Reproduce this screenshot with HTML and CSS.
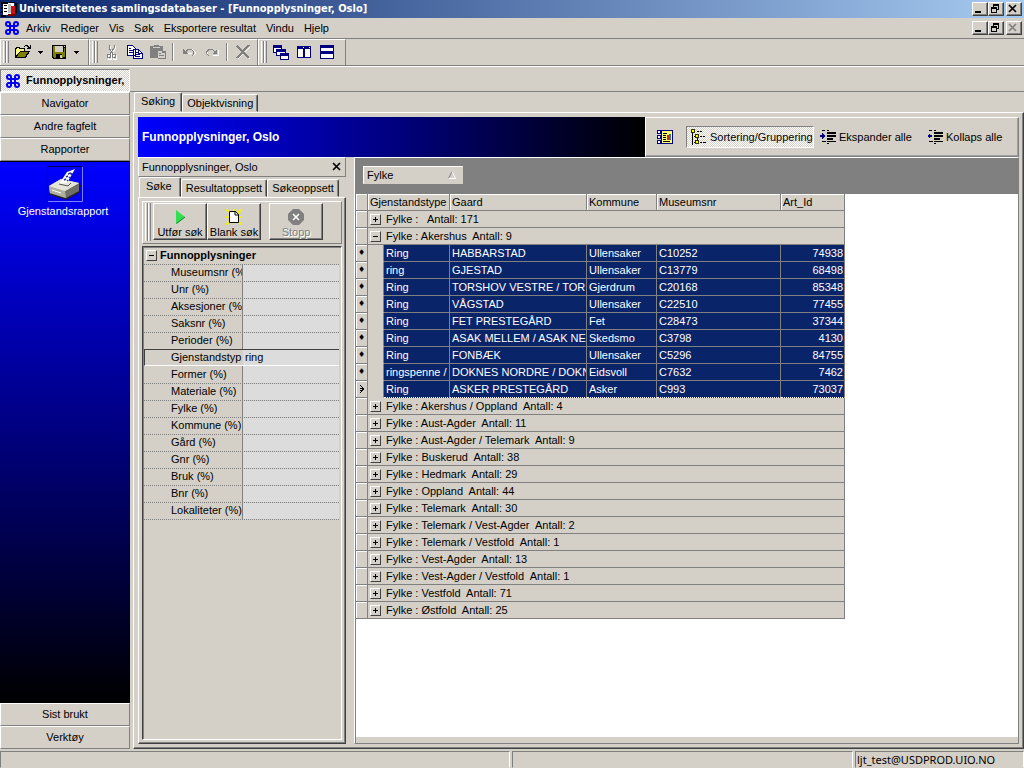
FILE: index.html
```html
<!DOCTYPE html>
<html lang="no">
<head>
<meta charset="utf-8">
<title>Universitetenes samlingsdatabaser</title>
<link rel="stylesheet" href="styles.css">
</head>
<body>
<svg class="defs" aria-hidden="true">
  <symbol id="knot" viewBox="0 0 14 14"><path d="M5 5H3a2 2 0 1 1 2-2v8a2 2 0 1 1-2-2h8a2 2 0 1 1-2 2V3a2 2 0 1 1 2 2H3" fill="none" stroke="#0000f0" stroke-width="2"/></symbol>
  <symbol id="min" viewBox="0 0 12 10"><path d="M2 7h6v2H2z"/></symbol>
  <symbol id="restore" viewBox="0 0 12 10"><path d="M4 0h6v6H8V5h1V2H5v1H4zM2 3h6v6H2zM3 5v3h4V5z" fill-rule="evenodd"/></symbol>
  <symbol id="close" viewBox="0 0 12 10"><path d="M2 1l7 7M9 1L2 8" fill="none" stroke="currentColor" stroke-width="1.7"/></symbol>
  <symbol id="drop" viewBox="0 0 6 3"><path d="M0 0h5v1H4v1H3v1H2V2H1V1H0z"/></symbol>
</svg>
<header class="titlebar">
  <svg class="i16" viewBox="0 0 16 16"><path d="M2 2h11v12H2z" fill="#fff"/><path d="M0 1h7v2H2v2H0zM0 6h2v2H0zM0 10h2v2H0zM0 14h5v2H0zM3 4h3v1H3zM3 7h3v1H3zM3 10h3v1H3zM8 1h6v1H8zM14 2h2v10h-2z"/><path d="M10 5h4v10h-4z" fill="#d01010"/><path d="M7 3h3v9H7z" fill="#c0c0c0"/><path d="M7 13h8v2H7z" fill="#700"/></svg>
  <h1>Universitetenes samlingsdatabaser - [Funnopplysninger, Oslo]</h1>
  <div class="winbtns"><button aria-label="Minimer"><svg><use href="#min"/></svg></button><button aria-label="Gjenopprett"><svg><use href="#restore"/></svg></button><button class="x" aria-label="Lukk"><svg><use href="#close"/></svg></button></div>
</header>
<nav class="menubar">
  <svg class="i14"><use href="#knot"/></svg>
  <button>Arkiv</button><button>Rediger</button><button>Vis</button><button>Søk</button><button>Eksportere resultat</button><button>Vindu</button><button>Hjelp</button>
  <div class="winbtns"><button aria-label="Minimer vindu"><svg><use href="#min"/></svg></button><button aria-label="Gjenopprett vindu"><svg><use href="#restore"/></svg></button><button class="x" aria-label="Lukk vindu" disabled><svg><use href="#close"/></svg></button></div>
</nav>
<div class="toolbar">
  <div class="tgroup first"><i class="grip"></i>
    <button aria-label="Åpne"><svg viewBox="0 0 16 16"><path d="M0 14V4h1V3h4v1h5v3h5l-4 7z"/><path d="M1 5h1V4h2v1h5v2H5L1 12z" fill="#ffff80"/><path d="M5 8h8l-3 5H2z" fill="#808000"/><path d="M9 2h1V1h3v1h1v1h1V1h1v4h-4V4h1V3h-1V2h-2v1H9z"/></svg></button>
    <button class="dd" aria-label="Åpne, valg"><svg><use href="#drop"/></svg></button>
    <button aria-label="Lagre"><svg viewBox="0 0 16 16"><path d="M1 1h14v14H2l-1-1z"/><path d="M2 2h2v6h9V4h1v9h-2v1h-1v-4H5v4H3l-1-1z" fill="#808000"/><path d="M4 2h8v6H4z" fill="#d4d0c8"/><path d="M13 2h1v1h-1zM9 11h2v3H9z" fill="#d4d0c8"/></svg></button>
    <button class="dd" aria-label="Lagre, valg"><svg><use href="#drop"/></svg></button>
  </div>
  <div class="tgroup second"><i class="grip"></i>
    <button disabled aria-label="Klipp ut"><svg viewBox="0 0 16 16"><g fill="none" stroke="#fff" transform="translate(1 1)"><path d="M5 1v3l4 6M10 1v3l-4 6"/><circle cx="5" cy="12.500" r="2"/><circle cx="10" cy="12.500" r="2"/></g><g fill="none" stroke="#808080"><path d="M5 1v3l4 6M10 1v3l-4 6"/><circle cx="5" cy="12" r="2"/><circle cx="10" cy="12" r="2"/></g></svg></button>
    <button aria-label="Kopier"><svg viewBox="0 0 16 16"><path d="M.5 1.500h5l3 3v7h-8zM6.500 5.500h5l4 4v5h-9z" fill="#fff" stroke="#000080"/><path d="M2 4h2v1H2zM2 6h4v1H2zM2 8h4v1H2zM8 8h3v1H8zM8 10h5v1H8zM8 12h5v1H8zM11 6h1v3h3v1h-4z" fill="#000080"/></svg></button>
    <button disabled aria-label="Lim inn"><svg viewBox="0 0 16 16"><path d="M0 2h4V1h5v1h4v5h3v8H8v-1H0z" fill="#808080"/><path d="M3 3h7v1H3zM8 7h4v2h3v5H8z" fill="#d4d0c8"/><path d="M9 9h2v1H9zM9 11h5v1H9z" fill="#808080"/></svg></button>
    <i class="sep"></i>
    <button disabled aria-label="Angre"><svg viewBox="0 0 16 16"><path d="M4 9h6v1M4 8l3-3h4l3 3v2l-2 2" fill="none" stroke="#fff"/><path d="M2 5v5h5L5 8l2-2h3l2 2v2l-2 2h1l2-2V7l-3-2H7L4 7z" fill="#808080"/></svg></button>
    <button disabled aria-label="Gjør om"><svg viewBox="0 0 16 16"><path d="M14 6v5H9M5 12L3 10V8" fill="none" stroke="#fff"/><path d="M13 5v5H8l2-2-2-2H5L3 8v2l2 2H4l-2-2V7l3-2h3l3 2z" fill="#808080"/></svg></button>
    <i class="sep"></i>
    <button disabled aria-label="Slett"><svg viewBox="0 0 16 16"><path d="M3 3l12 12M15 3L3 15" stroke="#fff"/><path d="M2 2l12 12M14 1L2 14" stroke="#808080" stroke-width="2"/></svg></button>
  </div>
  <div class="tgroup third"><i class="grip"></i>
    <button aria-label="Overlappende"><svg viewBox="0 0 16 16"><path d="M0 1h9v8H0zM3 5h10v7H3zM7 9h9v7H7z" fill="#000080"/><path d="M1 4h7v1H3v3H1zM4 8h8v1H7v2H4zM8 12h7v3H8z" fill="#fff"/></svg></button>
    <button aria-label="Side ved side"><svg viewBox="0 0 16 16"><path d="M1 2h14v12H1z" fill="#000080"/><path d="M2 5h5v8H2zM9 5h5v8H9zM7 3h1v1H7zM13 3h1v1h-1z" fill="#fff"/></svg></button>
    <button aria-label="Over hverandre"><svg viewBox="0 0 16 16"><path d="M1 1h14v14H1z" fill="#000080"/><path d="M2 4h12v3H2zM2 10h12v4H2z" fill="#fff"/></svg></button>
  </div>
</div>
<div class="docbar"><button class="doc"><svg class="i14"><use href="#knot"/></svg><span>Funnopplysninger,</span></button></div>

<div class="work">
  <aside class="side">
    <button>Navigator</button><button>Andre fagfelt</button><button>Rapporter</button>
    <div class="reports">
      <a href="#rapport"><svg viewBox="0 0 36 36"><path d="M.5 35V.5H35" fill="none" stroke="#000050"/><path d="M1 35.500h34.500V1" fill="none" stroke="#8080ff"/><path d="M2 20L14 13l18 4v8L19 32 3 27z" fill="#c8c8b8"/><path d="M2 20l16 5 14-8v9L19 33 3 28z" fill="#b0b0a0"/><path d="M18 25l14-8v9l-13 7z" fill="#707068"/><path d="M2 20L14 13l18 4-14 8z" fill="#e4e4d8"/><path d="M12 18L20 6l8-3-8 14z" fill="#fff"/><path d="M17 14l2-1M19 11l2-1M21 8l3-1M20 15l1-1M22 12l1-1M24 9l1-2" stroke="#223a90" stroke-width="1.500"/><path d="M12 18l9 2 3-3" fill="none" stroke="#555"/><path d="M3 28l16 5 13-7" fill="none" stroke="#222" stroke-width="1.500"/><path d="M32 17l2 3-2 2z" fill="#222"/><path d="M5 24l9 3" stroke="#fff"/></svg><span>Gjenstandsrapport</span></a>
    </div>
    <button>Sist brukt</button><button>Verktøy</button>
  </aside>

  <main class="main">
    <div class="tabs"><button class="on">Søking</button><button>Objektvisning</button></div>
    <div class="page">
      <div class="banner">
        <h2>Funnopplysninger, Oslo</h2>
        <div class="actions">
          <button class="view" aria-label="Visning"><svg viewBox="0 0 16 16"><path d="M0 1h4v4H0zM0 6h4v4H0zM0 11h4v4H0zM4 1h12v14H4z" fill="#000080"/><path d="M1 2h2v2H1zM1 7h2v2H1zM1 12h2v2H1z" fill="#fff"/><path d="M5 2h10v12H5z" fill="#ffff70"/><path d="M6 4h4v1H6zM6 6h3v1H6zM6 8h3v1H6zM6 10h3v1H6zM6 12h7v1H6z"/><path d="M10 6h2v5h-2z" fill="#e02020"/><path d="M12 5h2v6h-2z" fill="#208080"/></svg></button>
          <button class="sort"><svg viewBox="0 0 16 16"><path d="M1 3h1v13H1zM3 7h2v1H3zM3 13h2v1H3zM6 2h2v1H6zM9 2h2v1H9zM9 7h2v1H9zM12 7h2v1h-2zM9 13h2v1H9zM12 13h3v1h-3zM6 9h1v2H6z"/><path d="M.5.500h3v3h-3zM4.500 5.500h3v3h-3zM4.500 11.500h3v3h-3z" fill="#ff0" stroke="#333300"/></svg>Sortering/Gruppering</button>
          <button class="exp"><svg viewBox="0 0 16 16"><path d="M2 1h3v1H2zM7 1h2v1H7zM7 3h9v2H7zM7 6h9v2H7zM7 9h6v2H7zM2 12h4v1H2zM7 12h9v1H7zM7 14h2v1H7z"/><path d="M0 6h2V4l3 3-3 3V8H0z" fill="#000080"/></svg>Ekspander alle</button>
          <button class="kol"><svg viewBox="0 0 16 16"><path d="M2 1h3v1H2zM7 1h2v1H7zM7 3h9v2H7zM7 6h9v2H7zM7 9h6v2H7zM2 12h4v1H2zM7 12h9v1H7zM7 14h2v1H7z"/><path d="M5 6H3V4L0 7l3 3V8h2z" fill="#000080"/></svg>Kollaps alle</button>
        </div>
      </div>
      <div class="split">
        <section class="search">
          <div class="caption"><span>Funnopplysninger, Oslo</span><button aria-label="Lukk søk"><svg><use href="#close"/></svg></button></div>
          <div class="tabs small"><button class="on">Søke</button><button>Resultatoppsett</button><button>Søkeoppsett</button></div>
          <div class="pane">
            <div class="runbar"><i class="grip"></i>
              <button><svg viewBox="0 0 16 16"><path d="M4 1l9 7-9 7z" fill="#30e050"/><path d="M4.500 14.500L13 8" stroke="#108020"/></svg>Utfør søk</button>
              <button><svg viewBox="0 0 16 16"><path d="M0 0l16 16M16 0L0 16M8 0v3M0 8h16" stroke="#f0f000" stroke-width="2"/><path d="M3.500 2.500h6l3 3v8h-9z" fill="#fff" stroke="#000"/><path d="M9 2v4h4" fill="none" stroke="#000"/></svg>Blank søk</button>
              <button class="stop" disabled><svg viewBox="0 0 16 16"><path d="M5 0h6l5 5v6l-5 5H5l-5-5V5z" fill="#808080"/><path d="M5 5l6 6M11 5l-6 6" stroke="#fff" stroke-width="1.500"/></svg>Stopp</button>
            </div>
            <div class="fields">
              <h3><button class="pm minus" aria-label="Skjul felt"></button>Funnopplysninger</h3>
              <div class="f"><label for="a1">Museumsnr (%</label><input id="a1"></div>
              <div class="f"><label for="a2">Unr (%)</label><input id="a2"></div>
              <div class="f"><label for="a3">Aksesjoner (%</label><input id="a3"></div>
              <div class="f"><label for="a4">Saksnr (%)</label><input id="a4"></div>
              <div class="f"><label for="a5">Perioder (%)</label><input id="a5"></div>
              <div class="f cur"><label for="a6">Gjenstandstyp</label><input id="a6" value="ring"></div>
              <div class="f"><label for="a7">Former (%)</label><input id="a7"></div>
              <div class="f"><label for="a8">Materiale (%)</label><input id="a8"></div>
              <div class="f"><label for="a9">Fylke (%)</label><input id="a9"></div>
              <div class="f"><label for="a10">Kommune (%)</label><input id="a10"></div>
              <div class="f"><label for="a11">Gård (%)</label><input id="a11"></div>
              <div class="f"><label for="a12">Gnr (%)</label><input id="a12"></div>
              <div class="f"><label for="a13">Bruk (%)</label><input id="a13"></div>
              <div class="f"><label for="a14">Bnr (%)</label><input id="a14"></div>
              <div class="f"><label for="a15">Lokaliteter (%)</label><input id="a15"></div>
            </div>
          </div>
        </section>
        <section class="result">
          <div class="groupby"><button>Fylke<svg viewBox="0 0 8 8"><path d="M.5 7.500L4 .5" stroke="#808080" fill="none"/><path d="M4 .5l3.500 7h-7" stroke="#fff" fill="none"/></svg></button></div>
          <table>
            <colgroup><col class="c0"><col class="c1"><col class="c2"><col class="c3"><col class="c4"><col class="c5"><col class="c6"></colgroup>
            <thead><tr><th></th><th colspan="2">Gjenstandstype</th><th>Gaard</th><th>Kommune</th><th>Museumsnr</th><th>Art_Id</th></tr></thead>
            <tbody>
              <tr class="g"><td></td><td colspan="6"><button class="pm" aria-label="Vis"></button>Fylke : &nbsp; Antall: 171</td></tr>
              <tr class="g"><td></td><td colspan="6"><button class="pm minus" aria-label="Skjul"></button>Fylke : Akershus&nbsp; Antall: 9</td></tr>
              <tr class="d"><td>♦</td><td></td><td>Ring</td><td>HABBARSTAD</td><td>Ullensaker</td><td>C10252</td><td>74938</td></tr>
              <tr class="d"><td>♦</td><td></td><td>ring</td><td>GJESTAD</td><td>Ullensaker</td><td>C13779</td><td>68498</td></tr>
              <tr class="d"><td>♦</td><td></td><td>Ring</td><td>TORSHOV VESTRE / TOR</td><td>Gjerdrum</td><td>C20168</td><td>85348</td></tr>
              <tr class="d"><td>♦</td><td></td><td>Ring</td><td>VÅGSTAD</td><td>Ullensaker</td><td>C22510</td><td>77455</td></tr>
              <tr class="d"><td>♦</td><td></td><td>Ring</td><td>FET PRESTEGÅRD</td><td>Fet</td><td>C28473</td><td>37344</td></tr>
              <tr class="d"><td>♦</td><td></td><td>Ring</td><td>ASAK MELLEM / ASAK NE</td><td>Skedsmo</td><td>C3798</td><td>4130</td></tr>
              <tr class="d"><td>♦</td><td></td><td>Ring</td><td>FONBÆK</td><td>Ullensaker</td><td>C5296</td><td>84755</td></tr>
              <tr class="d"><td>♦</td><td></td><td>ringspenne /</td><td>DOKNES NORDRE / DOKN</td><td>Eidsvoll</td><td>C7632</td><td>7462</td></tr>
              <tr class="d last"><td><svg viewBox="0 0 6 8"><path d="M1 0l4 4-4 4M1 3h2v2H1" fill="none" stroke="#000"/></svg></td><td></td><td>Ring</td><td>ASKER PRESTEGÅRD</td><td>Asker</td><td>C993</td><td>73037</td></tr>
              <tr class="g"><td></td><td colspan="6"><button class="pm" aria-label="Vis"></button>Fylke : Akershus / Oppland&nbsp; Antall: 4</td></tr>
              <tr class="g"><td></td><td colspan="6"><button class="pm" aria-label="Vis"></button>Fylke : Aust-Agder&nbsp; Antall: 11</td></tr>
              <tr class="g"><td></td><td colspan="6"><button class="pm" aria-label="Vis"></button>Fylke : Aust-Agder / Telemark&nbsp; Antall: 9</td></tr>
              <tr class="g"><td></td><td colspan="6"><button class="pm" aria-label="Vis"></button>Fylke : Buskerud&nbsp; Antall: 38</td></tr>
              <tr class="g"><td></td><td colspan="6"><button class="pm" aria-label="Vis"></button>Fylke : Hedmark&nbsp; Antall: 29</td></tr>
              <tr class="g"><td></td><td colspan="6"><button class="pm" aria-label="Vis"></button>Fylke : Oppland&nbsp; Antall: 44</td></tr>
              <tr class="g"><td></td><td colspan="6"><button class="pm" aria-label="Vis"></button>Fylke : Telemark&nbsp; Antall: 30</td></tr>
              <tr class="g"><td></td><td colspan="6"><button class="pm" aria-label="Vis"></button>Fylke : Telemark / Vest-Agder&nbsp; Antall: 2</td></tr>
              <tr class="g"><td></td><td colspan="6"><button class="pm" aria-label="Vis"></button>Fylke : Telemark / Vestfold&nbsp; Antall: 1</td></tr>
              <tr class="g"><td></td><td colspan="6"><button class="pm" aria-label="Vis"></button>Fylke : Vest-Agder&nbsp; Antall: 13</td></tr>
              <tr class="g"><td></td><td colspan="6"><button class="pm" aria-label="Vis"></button>Fylke : Vest-Agder / Vestfold&nbsp; Antall: 1</td></tr>
              <tr class="g"><td></td><td colspan="6"><button class="pm" aria-label="Vis"></button>Fylke : Vestfold&nbsp; Antall: 71</td></tr>
              <tr class="g"><td></td><td colspan="6"><button class="pm" aria-label="Vis"></button>Fylke : Østfold&nbsp; Antall: 25</td></tr>
            </tbody>
          </table>
        </section>
      </div>
    </div>
  </main>
</div>
<footer class="status"><span></span><span></span><span>ljt_test@USDPROD.UIO.NO</span></footer>
</body>
</html>
```
FILE: styles.css
```css
* { box-sizing: border-box; }
body { margin: 0; height: 100vh; display: flex; flex-direction: column; overflow: hidden; background: #d4d0c8; color: #000; font: 11px/13px "Liberation Sans", Arial, sans-serif; }
button, input { font: inherit; color: inherit; margin: 0; padding: 0; border: 0; background: none; border-radius: 0; }
h1, h2, h3 { margin: 0; font: inherit; font-weight: bold; }
svg { display: block; flex: none; shape-rendering: crispEdges; }
.defs { display: none; }
.i16 { width: 16px; height: 16px; }
.i14 { width: 14px; height: 14px; shape-rendering: auto; }

.titlebar { height: 18px; display: flex; align-items: center; gap: 2px; padding: 0 2px 0 1px; background: linear-gradient(90deg, #0a246a, #a6caf0); color: #fff; }
.titlebar h1 { flex: 1; font: bold 11px/14px "DejaVu Sans Condensed", "DejaVu Sans", sans-serif; white-space: nowrap; }
.winbtns { display: flex; margin-left: auto; color: #000; }
.winbtns button { width: 16px; height: 14px; background: #d4d0c8; border: 1px solid; border-color: #fff #404040 #404040 #fff; box-shadow: inset -1px -1px #808080; }
.winbtns .x { margin-left: 2px; }
.winbtns svg { width: 12px; height: 10px; }
.winbtns .x svg, .caption button svg { shape-rendering: auto; }
.winbtns button:disabled { color: #808080; }

.menubar { height: 21px; display: flex; align-items: center; padding: 0 2px 0 5px; border-bottom: 1px solid #808080; }
.menubar > button { padding: 0 5px; height: 20px; }
.menubar .i14 { margin-right: 2px; }

.toolbar { height: 27px; display: flex; border-bottom: 1px solid #808080; }
.tgroup { display: flex; align-items: center; padding: 0 0 1px 3px; border: solid; border-width: 1px 1px 0 0; border-color: #fff #808080; box-shadow: inset 1px 0 #fff; }
.first { width: 89px; }
.second { width: 169px; }
.third { width: 88px; }
.grip { flex: none; width: 6px; height: 22px; margin-right: 2px; background: linear-gradient(90deg, #fff 0 1px, #d4d0c8 1px 2px, #808080 2px 3px, #fff 3px 4px, #d4d0c8 4px 5px, #808080 5px 6px); }
.tgroup button { width: 23px; height: 22px; display: flex; align-items: center; justify-content: center; }
.tgroup button svg { width: 16px; height: 16px; }
.tgroup .dd { width: 13px; }
.tgroup .dd svg { width: 6px; height: 3px; }
.sep { width: 2px; height: 18px; margin: 0 3px; border-left: 1px solid #808080; border-right: 1px solid #fff; }

.docbar { height: 26px; padding-top: 2px; border-top: 1px solid #fff; border-bottom: 1px solid #808080; }
.doc { width: 130px; height: 23px; display: flex; align-items: center; gap: 6px; padding-left: 5px; overflow: hidden; white-space: nowrap; font-weight: bold; border: 1px solid; border-color: #808080 #fff #fff #808080; background: repeating-conic-gradient(#fff 0 25%, #d4d0c8 0 50%) 0 0 / 2px 2px; }

.work { flex: 1; min-height: 0; display: flex; gap: 3px; }
.side { width: 130px; display: flex; flex-direction: column; }
.side > button { height: 23px; border: 1px solid; border-color: #fff #808080 #808080 #fff; }
.reports { flex: 1; padding-top: 4px; background: linear-gradient(#00f, #000); border-top: 1px solid #000; }
.reports a { display: flex; flex-direction: column; align-items: center; gap: 3px; padding-right: 4px; color: #fff; text-decoration: none; }
.reports svg { width: 36px; height: 36px; margin-left: 4px; shape-rendering: auto; }

.main { flex: 1; min-width: 0; display: flex; flex-direction: column; }
.tabs { display: flex; align-items: flex-end; height: 20px; padding-left: 1px; }
.tabs button { height: 18px; padding: 0 4px; white-space: nowrap; border: 1px solid; border-color: #fff #404040 transparent #fff; border-radius: 2px 2px 0 0; box-shadow: inset -1px 0 #808080; }
.tabs .on { height: 20px; padding: 0 6px 2px; }
.page { flex: 1; min-height: 0; display: flex; flex-direction: column; padding: 4px; border: 1px solid; border-color: #fff #404040 #404040 #fff; box-shadow: inset -1px -1px #808080; }
.banner { height: 40px; display: flex; }
.banner h2 { flex: 1; padding: 13px 4px; font-size: 12px; line-height: 14px; color: #fff; background: linear-gradient(90deg, #00f, #000); }
.actions { width: 374px; display: flex; align-items: center; border: 1px solid; border-color: #fff #808080 #808080 #fff; box-shadow: inset -1px -1px #a0a0a0; }
.actions button { display: flex; align-items: center; gap: 3px; height: 22px; white-space: nowrap; }
.actions svg { width: 16px; height: 16px; }
.view { margin: 0 13px 0 11px; }
.actions .sort { width: 128px; padding-left: 4px; border: 1px solid; border-color: #808080 #fff #fff #808080; background: repeating-conic-gradient(#fff 0 25%, #d4d0c8 0 50%) 0 0 / 2px 2px; }
.exp { width: 107px; padding-left: 6px; }
.kol { padding-left: 6px; }

.split { flex: 1; min-height: 0; display: flex; gap: 8px; }
.search { width: 208px; display: flex; flex-direction: column; }
.caption { height: 20px; display: flex; justify-content: space-between; align-items: center; padding: 0 2px 0 3px; border: 1px solid; border-color: #fff #808080 #808080 #fff; }
.caption svg { width: 12px; height: 10px; }
.small .on { padding: 0 8px 2px 6px; }
.pane { flex: 1; min-height: 0; display: flex; flex-direction: column; gap: 2px; padding: 3px; border: 1px solid; border-color: #fff #404040 #404040 #fff; box-shadow: inset -1px -1px #808080; }
.runbar { height: 43px; display: flex; padding: 1px 2px; border: 1px solid; border-color: #fff #808080 #808080 #fff; }
.runbar .grip { height: 38px; }
.runbar button { width: 54px; height: 37px; display: flex; flex-direction: column; align-items: center; justify-content: flex-end; gap: 1px; border: 1px solid; border-color: #fff #404040 #404040 #fff; box-shadow: inset -1px -1px #808080; }
.runbar svg { width: 16px; height: 16px; shape-rendering: auto; }
.runbar .stop { margin-left: 8px; color: #808080; text-shadow: 1px 1px #fff; }
.fields { flex: 1; min-height: 0; padding: 0 2px 0 1px; border: 1px solid; border-color: #404040 #fff #fff #404040; box-shadow: inset 1px 1px #808080; }
.fields h3 { height: 17px; display: flex; align-items: center; gap: 3px; padding-left: 2px; }
.f { height: 17px; display: flex; border-top: 1px dotted #808080; }
.f:last-child { height: 18px; border-bottom: 1px dotted #808080; }
.f label { width: 99px; padding: 1px 0 0 27px; overflow: hidden; white-space: nowrap; border-right: 1px solid #808080; }
.f input { flex: 1; min-width: 0; padding: 0 2px; background: #dcdcdc; }
.f.cur { border-top: 1px solid #404040; border-left: 1px solid #404040; border-bottom: 1px solid #fff; }
.f.cur label { width: 98px; padding-left: 26px; border-color: #d4d0c8; }
.f.cur + .f { border-top: 0; }
.f.cur + .f label { padding-top: 2px; }

.pm { position: relative; width: 11px; height: 11px; flex: none; border: 1px solid; border-color: #fff #404040 #404040 #fff; }
.pm::before, .pm::after { content: ""; position: absolute; left: 2px; top: 4px; width: 5px; height: 1px; background: #000; }
.pm::after { left: 4px; top: 2px; width: 1px; height: 5px; }
.minus::after { display: none; }

.result { flex: 1; min-width: 0; background: #fff; border: 1px solid; border-color: #fff #808080 #808080 #fff; box-shadow: inset 1px 0 #808080, inset 0 -6px #d4d0c8; }
.groupby { height: 36px; padding: 8px; background: #808080; }
.groupby button { width: 100px; height: 18px; display: flex; justify-content: space-between; align-items: center; padding: 0 6px 0 3px; background: #d4d0c8; border: 1px solid; border-color: #fff #d4d0c8 #d4d0c8 #fff; }
.groupby svg { width: 8px; height: 8px; shape-rendering: auto; }
table { width: 489px; margin-left: 1px; table-layout: fixed; border-collapse: separate; border-spacing: 0; background: #d4d0c8; }
.c0 { width: 12px; } .c1 { width: 16px; } .c2 { width: 66px; } .c3 { width: 137px; } .c4 { width: 70px; } .c5 { width: 124px; } .c6 { width: 64px; }
th, td { height: 17px; padding: 0 2px; line-height: 16px; overflow: hidden; white-space: nowrap; text-align: left; font-weight: normal; border-right: 1px solid #808080; border-bottom: 1px solid #808080; }
th { box-shadow: inset 1px 1px #fff; }
th:first-child, td:first-child { padding: 0; text-align: center; box-shadow: inset 1px 1px #fff; }
.g .pm { display: inline-block; vertical-align: -1px; margin-right: 5px; }
.d td:first-child { font: 8px/14px "DejaVu Sans", sans-serif; }
.d td:first-child svg { width: 6px; height: 8px; margin: auto; }
.d td:nth-child(2) { border-bottom-color: #d4d0c8; }
.d td:nth-child(n+3) { background: #0a246a; color: #fff; }
.d td:last-child { text-align: right; padding-right: 1px; }
.last td:nth-child(n+3) { border-bottom: 1px dotted #fff; }

.status { height: 17px; margin-top: 2px; display: flex; gap: 2px; font: 11px/15px "Noto Sans", sans-serif; }
.status span { border: 1px solid; border-color: #808080 #fff transparent #808080; }
.status span:nth-child(1) { flex: 3; }
.status span:nth-child(2) { flex: 2; }
.status span:nth-child(3) { width: 169px; padding-left: 1px; }
```
